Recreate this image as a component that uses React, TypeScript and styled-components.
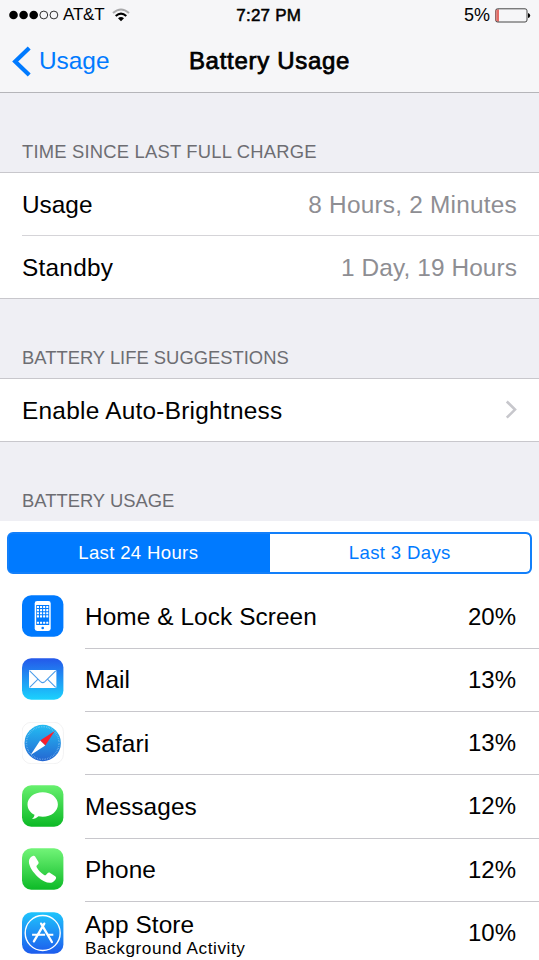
import React from "react";
import styled, { createGlobalStyle } from "styled-components";

const BLUE = "#007aff";

const GlobalStyle = createGlobalStyle`
  *, *::before, *::after { box-sizing: border-box; }
  body {
    margin: 0;
    background: #efeff4;
    color: #000;
    font-family: "Liberation Sans", Arial, sans-serif;
    font-size: 24.4px;
    line-height: 1.15;
  }
  svg { display: block; }
`;

const Screen = styled.main`
  width: 539px;
  height: 960px;
  overflow: hidden;
  background: #efeff4;
  white-space: nowrap;
`;

const Header = styled.header`
  height: 93px;
  background: #f6f6f8;
  border-bottom: 1px solid #b5b5b9;
`;

const Bar = styled.div<{ $height: number }>`
  display: grid;
  grid-template-columns: 1fr auto 1fr;
  align-items: center;
  height: ${(p) => p.$height}px;
`;

const StatusLeft = styled.div`
  display: flex;
  align-items: center;
  padding-left: 9px;
`;

const Carrier = styled.span`
  margin: 0 8px 0 4px;
  font-size: 17px;
  letter-spacing: -0.2px;
`;

const Clock = styled.span`
  padding: 1px 1.5px 0 0;
  font-size: 17px;
  letter-spacing: 0.25px;
  -webkit-text-stroke: 0.5px #000;
`;

const StatusRight = styled.div`
  display: flex;
  align-items: center;
  justify-content: flex-end;
  gap: 5px;
  padding-right: 8px;
  font-size: 18px;
`;

const BackButton = styled.a`
  display: flex;
  align-items: center;
  gap: 8px;
  padding-left: 12px;
  color: ${BLUE};
`;

const Title = styled.h1`
  margin: 0;
  font-size: 24px;
  font-weight: 400;
  letter-spacing: 0.7px;
  -webkit-text-stroke: 0.75px #000;
`;

const SectionTitle = styled.h2<{ $height: number; $spacing?: number }>`
  display: flex;
  align-items: flex-end;
  height: ${(p) => p.$height}px;
  margin: 0;
  padding: 0 22px 10px;
  color: #6d6d72;
  font-size: 18.4px;
  font-weight: 400;
  letter-spacing: ${(p) => p.$spacing ?? 0}px;
`;

const Group = styled.section`
  background: #fff;
  border: solid #c8c7cc;
  border-width: 1px 0;
`;

const Row = styled.div`
  display: flex;
  align-items: center;
  justify-content: space-between;
  height: 62px;
  margin-left: 22px;
  padding: 2px 22px 0 0;

  & + & {
    height: 63px;
    border-top: 1px solid #d5d4d8;
  }

  svg { margin-bottom: 3px; }
`;

const RowLabel = styled.span<{ $spacing?: number }>`
  letter-spacing: ${(p) => p.$spacing ?? 0}px;
`;

const RowValue = styled.span<{ $spacing: number }>`
  color: #8e8e93;
  letter-spacing: ${(p) => p.$spacing}px;
`;

const UsagePanel = styled.section`
  height: 440px;
  padding-top: 11px;
  background: #fff;
`;

const Segmented = styled.div`
  display: grid;
  grid-template-columns: 1fr 1fr;
  height: 42px;
  margin: 0 7px 11.5px;
  overflow: hidden;
  border: 2px solid #127ffa;
  border-radius: 6px;
  background: ${BLUE};
`;

const Segment = styled.div<{ $active?: boolean }>`
  display: flex;
  align-items: center;
  justify-content: center;
  padding-right: ${(p) => (p.$active ? 2 : 0)}px;
  color: ${(p) => (p.$active ? "#fff" : BLUE)};
  background: ${(p) => (p.$active ? BLUE : "#fff")};
  border-radius: ${(p) => (p.$active ? "0" : "0 4px 4px 0")};
  font-size: 18.6px;
  letter-spacing: 0.33px;
`;

const AppRow = styled.div`
  display: grid;
  grid-template-columns: 63.5px 1fr;
  align-items: center;
  height: 63.3px;
  padding-left: 21.5px;

  > svg { margin-bottom: 2px; }
`;

const AppContent = styled.div<{ $line: boolean }>`
  display: flex;
  align-items: center;
  justify-content: space-between;
  height: 100%;
  padding: 1px 23px 0 0;
  border-bottom: 1px solid ${(p) => (p.$line ? "#c8c7cc" : "transparent")};
`;

const AppLabel = styled.div`
  letter-spacing: 0.08px;
`;

const AppNote = styled.div`
  margin: 0 0 -2px;
  font-size: 17.2px;
  letter-spacing: 0.55px;
`;

const Percent = styled.span`
  padding-bottom: 1.5px;
  font-size: 24px;
`;

const SignalIcon = () => (
  <svg width="50" height="10" viewBox="0 0 50 10">
    {[0, 1, 2, 3, 4].map((i) => (
      <circle
        key={i}
        cx={4.5 + i * 10.1}
        cy="5"
        r={i < 3 ? 4.3 : 3.9}
        fill={i < 3 ? "#000" : "none"}
        stroke={i < 3 ? "none" : "#000"}
        strokeWidth="0.8"
      />
    ))}
  </svg>
);

const WifiIcon = () => (
  <svg width="18" height="14" viewBox="0 0 18 14" fill="none" strokeWidth="2">
    <path d="M1 5.1 Q9 -2.2 17 5.1" stroke="#a9a9ab" />
    <path d="M3.7 8 Q9 3.2 14.3 8" stroke="#000" />
    <path d="M6 10.2 Q9 7.8 12 10.2 L9 13.2Z" fill="#000" />
  </svg>
);

const BatteryIcon = () => (
  <svg width="36" height="15" viewBox="0 0 36 15">
    <rect x="1.4" y="1.4" width="2.6" height="12.2" fill="#e56b65" />
    <rect x="0.6" y="0.8" width="31.4" height="13.2" rx="2" fill="none" stroke="#333" strokeWidth="0.9" />
    <path d="M1 2v10.8" stroke="#d67974" strokeWidth="1" />
    <path d="M33 5q2.2 .5 2.2 2.5T33 10Z" fill="#000" />
  </svg>
);

const BackIcon = () => (
  <svg width="19" height="31" viewBox="0 0 19 31" fill="none" stroke={BLUE} strokeWidth="4.2">
    <path d="M17.2 2 3.2 15.5 17.2 29" />
  </svg>
);

const ChevronIcon = () => (
  <svg width="13" height="20" viewBox="0 0 13 20" fill="none" stroke="#c7c7cc" strokeWidth="2.6">
    <path d="M2.8 1.5 11 9.6 2.8 17.7" />
  </svg>
);

type TileProps = { id: string; from: string; to: string; border?: string; children: React.ReactNode };

const Tile = ({ id, from, to, border, children }: TileProps) => (
  <svg width="42" height="42" viewBox="0.3 0 42 42">
    <defs>
      <linearGradient id={id} x1="0" y1="0" x2="0" y2="1">
        <stop offset="0" stopColor={from} />
        <stop offset="1" stopColor={to} />
      </linearGradient>
    </defs>
    <rect x="0.3" y="0.3" width="41.4" height="41.4" rx="9.3" fill={`url(#${id})`} stroke={border} strokeWidth="0.7" />
    {children}
  </svg>
);

const HomeIcon = () => (
  <Tile id="home" from={BLUE} to={BLUE}>
    <rect x="13" y="6" width="16" height="30" rx="2.4" fill="#fff" />
    <rect x="14.5" y="10" width="13" height="20" fill={BLUE} />
    {[11, 14.1, 17.2, 20.3, 26.7].map((y) =>
      [15.2, 18.3, 21.4, 24.5].map((x) => (
        <rect key={`${x}-${y}`} x={x} y={y} width="2.1" height="2.1" rx="0.3" fill="#fff" />
      ))
    )}
    <circle cx="21" cy="33" r="1.3" fill={BLUE} />
  </Tile>
);

const MailIcon = () => (
  <Tile id="mail" from="#2458ea" to="#1bd2fd">
    <rect x="7.3" y="12" width="27.4" height="18" rx="1" fill="#fff" />
    <g fill="none" stroke="#4d9eea" strokeWidth="1.1">
      <path d="M8 12.8 18.8 23.6Q21 25.6 23.2 23.6L34 12.8" />
      <path d="M8 29.3 16.3 21.2M34 29.3 25.7 21.2" />
    </g>
  </Tile>
);

const SafariIcon = () => (
  <Tile id="safari" from="#fff" to="#fff" border="#ececee">
    <defs>
      <linearGradient id="dial" x1="0" y1="0" x2="0" y2="1">
        <stop offset="0" stopColor="#23bdf3" />
        <stop offset="1" stopColor="#2466d2" />
      </linearGradient>
    </defs>
    <circle cx="21" cy="21" r="18.2" fill="url(#dial)" />
    <circle cx="21" cy="21" r="16.3" fill="none" stroke="#9fd0f5" strokeWidth="1.5" strokeDasharray="0.4 1.3" />
    <path d="M33.1 8.9 18.4 18.4 23.6 23.6Z" fill="#fa1f2c" />
    <path d="M8.9 33.1 18.4 18.4 23.6 23.6Z" fill="#fff" />
  </Tile>
);

const MessagesIcon = () => (
  <Tile id="messages" from="#67f06e" to="#0cb925">
    <path
      d="M21 7.2C12.4 7.2 5.8 12.7 5.8 19.5c0 4.4 2.8 8.2 7 10.3-.2 1.8-1.1 3.2-2.5 4.1 2.7 0 4.8-1 6.5-2.6 1.4.3 2.8.4 4.2.4 8.6 0 15.2-5.4 15.2-12.2S29.6 7.2 21 7.2Z"
      fill="#fff"
    />
  </Tile>
);

const PhoneIcon = () => (
  <Tile id="phone" from="#72f478" to="#0dba27">
    <path
      d="M11.7 7.7C9.3 8.4 7.2 10.4 7.2 13.5c0 4.9 4.3 11.1 9 15.4 4.9 4.3 10.5 6.9 14.2 5.5 2.2-.8 4-3 4-4.6 0-.6-.3-1.1-.9-1.5l-5-3.3c-1.1-.7-1.8-.6-2.7.3l-1.4 1.4c-.7.6-1.2.7-2 .2-3.3-2.1-5.7-4.5-7.4-7.7-.4-.8-.3-1.3.3-1.9l1-1c.8-.9.8-1.7.2-2.7l-3.1-5.1c-.5-.8-1-.9-1.7-.8Z"
      fill="#fff"
    />
  </Tile>
);

const AppStoreIcon = () => (
  <Tile id="appstore" from="#1fc4fc" to="#1d5bed">
    <g fill="none" stroke="#fff" strokeWidth="1.4">
      <circle cx="21" cy="21" r="17.5" />
      <path d="M19.4 11.6 30.2 30M22.6 11.6 12.2 29.4" strokeWidth="2.3" strokeLinecap="round" />
      <path d="M10.4 22.7h13M26.4 22.7h5.2" strokeWidth="2" />
    </g>
  </Tile>
);

const apps = [
  { name: "Home & Lock Screen", percent: 20, Icon: HomeIcon },
  { name: "Mail", percent: 13, Icon: MailIcon },
  { name: "Safari", percent: 13, Icon: SafariIcon },
  { name: "Messages", percent: 12, Icon: MessagesIcon },
  { name: "Phone", percent: 12, Icon: PhoneIcon },
  { name: "App Store", percent: 10, note: "Background Activity", Icon: AppStoreIcon },
];

export default function App() {
  return (
    <Screen>
      <GlobalStyle />
      <Header>
        <Bar $height={30}>
          <StatusLeft>
            <SignalIcon />
            <Carrier>AT&amp;T</Carrier>
            <WifiIcon />
          </StatusLeft>
          <Clock>7:27 PM</Clock>
          <StatusRight>
            5%
            <BatteryIcon />
          </StatusRight>
        </Bar>
        <Bar $height={62}>
          <BackButton>
            <BackIcon />
            Usage
          </BackButton>
          <Title>Battery Usage</Title>
        </Bar>
      </Header>

      <SectionTitle $height={79} $spacing={0.2}>TIME SINCE LAST FULL CHARGE</SectionTitle>
      <Group>
        <Row>
          <RowLabel>Usage</RowLabel>
          <RowValue $spacing={0.22}>8 Hours, 2 Minutes</RowValue>
        </Row>
        <Row>
          <RowLabel $spacing={0.25}>Standby</RowLabel>
          <RowValue $spacing={0.1}>1 Day, 19 Hours</RowValue>
        </Row>
      </Group>

      <SectionTitle $height={79}>BATTERY LIFE SUGGESTIONS</SectionTitle>
      <Group>
        <Row>
          <RowLabel $spacing={0.25}>Enable Auto-Brightness</RowLabel>
          <ChevronIcon />
        </Row>
      </Group>

      <SectionTitle $height={79}>BATTERY USAGE</SectionTitle>
      <UsagePanel>
        <Segmented>
          <Segment $active>Last 24 Hours</Segment>
          <Segment>Last 3 Days</Segment>
        </Segmented>
        {apps.map(({ name, percent, note, Icon }, i) => (
          <AppRow key={name}>
            <Icon />
            <AppContent $line={i < apps.length - 1}>
              <div>
                <AppLabel>{name}</AppLabel>
                {note && <AppNote>{note}</AppNote>}
              </div>
              <Percent>{percent}%</Percent>
            </AppContent>
          </AppRow>
        ))}
      </UsagePanel>
    </Screen>
  );
}
